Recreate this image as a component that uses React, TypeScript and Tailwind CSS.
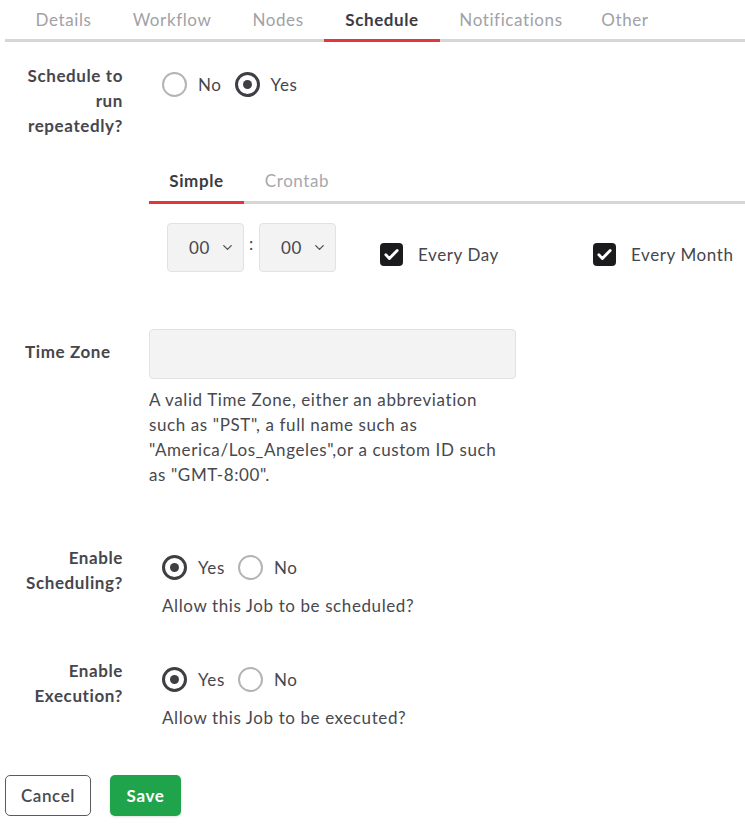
import { ChevronDown } from 'lucide-react';

const tabs = [
  { label: 'Details', w: 'w-[97px]' },
  { label: 'Workflow', w: 'w-[120px]' },
  { label: 'Nodes', w: 'w-[92px]' },
  { label: 'Schedule', w: 'w-[116px]', active: true },
  { label: 'Notifications', w: 'w-[142px]' },
  { label: 'Other', w: 'w-[86px]' },
];

function Radio({ checked, label }: { checked?: boolean; label: string }) {
  return (
    <label className="flex items-center mr-[13px]">
      {checked ? (
        <span className="w-[25px] h-[25px] rounded-full border-[3px] border-[#3e3e44] flex items-center justify-center">
          <span className="w-[9px] h-[9px] rounded-full bg-[#3e3e44]" />
        </span>
      ) : (
        <span className="w-[25px] h-[25px] rounded-full border-2 border-[#b4b4b8]" />
      )}
      <span className="ml-[11px] text-[17px] leading-[25px]">{label}</span>
    </label>
  );
}

function Check({ label }: { label: string }) {
  return (
    <div className="flex items-center mt-[19px]">
      <span className="w-[23px] h-[23px] rounded-[4px] bg-[#1b1b1d] flex items-center justify-center">
        <svg width="17" height="17" viewBox="0 0 24 24" fill="none" stroke="white" strokeWidth="4" strokeLinecap="round" strokeLinejoin="round">
          <path d="M4 12.5l5 5L20 6.5" />
        </svg>
      </span>
      <span className="ml-[15px] text-[17px] leading-[25px]">{label}</span>
    </div>
  );
}

function TimeSelect() {
  return (
    <div className="w-[77px] h-[49px] rounded-[4px] border border-[#e2e2e2] bg-[#f3f3f3] flex items-center pl-[21px] pr-[8px]">
      <span className="flex-1 text-[17px]">00</span>
      <ChevronDown className="w-[15px] h-[15px] text-[#55555a]" strokeWidth={2.25} />
    </div>
  );
}

export default function App() {
  return (
    <div className="w-[745px] min-h-[827px] bg-white font-['Lato',sans-serif] tracking-[0.6px] text-[#46464c]">
      {/* Top tabs */}
      <div className="ml-[5px] pl-[10px] flex border-b-[3px] border-[#d6d6d6]">
        {tabs.map((t) => (
          <div
            key={t.label}
            className={`${t.w} h-[39px] -mb-[3px] box-content flex items-center justify-center text-[17px] border-b-[3px] ${
              t.active ? 'border-[#e0363c] font-bold text-[#3c3c42]' : 'border-transparent text-[#a1a1a6]'
            }`}
          >
            {t.label}
          </div>
        ))}
      </div>

      {/* Schedule to run repeatedly */}
      <div className="flex mt-[21px]">
        <div className="w-[138px] pr-[15px] text-right font-bold text-[17px] leading-[25px]">
          Schedule to
          <br />
          run
          <br />
          repeatedly?
        </div>
        <div className="ml-[11px] flex-1">
          <div className="flex pt-[9px] pl-[13px]">
            <Radio label="No" />
            <Radio checked label="Yes" />
          </div>

          {/* Simple / Crontab */}
          <div className="mt-[64px] flex border-b-[3px] border-[#d6d6d6]">
            <div className="w-[95px] h-[40px] -mb-[3px] box-content flex items-center justify-center border-b-[3px] border-[#e0363c] font-bold text-[17px] text-[#3c3c42]">
              Simple
            </div>
            <div className="w-[106px] h-[40px] flex items-center justify-center text-[17px] text-[#a8a8ad]">
              Crontab
            </div>
          </div>

          <div className="mt-[19px] pl-[18px] flex items-start">
            <TimeSelect />
            <span className="w-[15px] text-center text-[17px] leading-[25px] mt-[8px]">:</span>
            <TimeSelect />
            <div className="ml-[44px] w-[213px]">
              <Check label="Every Day" />
            </div>
            <Check label="Every Month" />
          </div>
        </div>
      </div>

      {/* Time Zone */}
      <div className="flex mt-[57px]">
        <div className="w-[138px] pl-[25px] pt-[10px] font-bold text-[17px] leading-[25px]">Time Zone</div>
        <div className="ml-[11px]">
          <div className="w-[367px] h-[50px] rounded-[4px] border border-[#e2e2e2] bg-[#f3f3f3]" />
          <p className="mt-[8px] text-[17px] leading-[25px] text-[#48484e]">
            A valid Time Zone, either an abbreviation
            <br />
            such as "PST", a full name such as
            <br />
            "America/Los_Angeles",or a custom ID such
            <br />
            as "GMT-8:00".
          </p>
        </div>
      </div>

      {/* Enable Scheduling */}
      <div className="flex mt-[58px]">
        <div className="w-[138px] pr-[15px] text-right font-bold text-[17px] leading-[25px]">
          Enable
          <br />
          Scheduling?
        </div>
        <div className="ml-[24px]">
          <div className="flex pt-[10px]">
            <Radio checked label="Yes" />
            <Radio label="No" />
          </div>
          <p className="mt-[13px] text-[17px] leading-[25px] text-[#48484e]">Allow this Job to be scheduled?</p>
        </div>
      </div>

      {/* Enable Execution */}
      <div className="flex mt-[40px]">
        <div className="w-[138px] pr-[15px] text-right font-bold text-[17px] leading-[25px]">
          Enable
          <br />
          Execution?
        </div>
        <div className="ml-[24px]">
          <div className="flex pt-[9px]">
            <Radio checked label="Yes" />
            <Radio label="No" />
          </div>
          <p className="mt-[13px] text-[17px] leading-[25px] text-[#48484e]">Allow this Job to be executed?</p>
        </div>
      </div>

      {/* Buttons */}
      <div className="flex mt-[45px] ml-[5px] gap-[19px]">
        <button className="w-[86px] h-[41px] rounded-[5px] border border-[#5a5a60] bg-white text-[17px] font-semibold text-[#4a4a50]">
          Cancel
        </button>
        <button className="w-[71px] h-[41px] rounded-[5px] bg-[#1fa34b] text-[17px] font-bold text-white shadow-sm">
          Save
        </button>
      </div>
    </div>
  );
}
